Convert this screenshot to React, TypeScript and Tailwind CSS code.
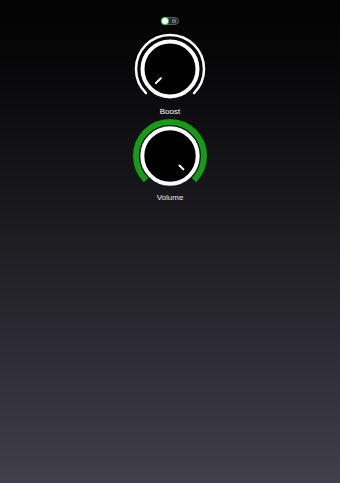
function Toggle() {
  return (
    <div className="flex h-[8px] w-[18px] items-center justify-between rounded-full border border-[#5a5a5e] bg-[#2a2a2d] pr-[2px]">
      <div className="-ml-px flex h-[8px] w-[8px] items-center justify-center rounded-full bg-[#34c759]">
        <div className="h-[6px] w-[6px] rounded-full bg-white" />
      </div>
      <div className="h-[4px] w-[4px] rounded-full border border-[#9a9a9e]" />
    </div>
  );
}

function BoostKnob() {
  return (
    <svg width="74" height="74" viewBox="0 0 74 74">
      <path
        d="M 12.96 61.04 A 34 34 0 1 1 61.04 61.04"
        fill="none"
        stroke="white"
        strokeWidth="2.5"
        strokeLinecap="round"
      />
      <circle cx="37" cy="37" r="27.5" fill="black" stroke="white" strokeWidth="4" />
      <line x1="27.8" y1="46.2" x2="22.86" y2="51.14" stroke="white" strokeWidth="2" strokeLinecap="round" />
    </svg>
  );
}

function VolumeKnob() {
  return (
    <svg width="78" height="78" viewBox="0 0 78 78">
      <path
        d="M 14.96 63.04 A 34 34 0 1 1 63.04 63.04"
        fill="none"
        stroke="#169b16"
        strokeWidth="6"
      />
      <circle cx="39" cy="39" r="27.7" fill="black" stroke="white" strokeWidth="4" />
      <line x1="48.5" y1="48.5" x2="52.4" y2="52.4" stroke="white" strokeWidth="2" strokeLinecap="round" />
    </svg>
  );
}

export default function App() {
  return (
    <main
      className="flex min-h-screen w-full flex-col items-center bg-gradient-to-b from-[#030303] to-[#413f4b] pt-[17px] text-white"
      style={{ fontFamily: '"Liberation Sans", Arial, sans-serif' }}
    >
      <Toggle />
      <div className="mt-[7px]">
        <BoostKnob />
      </div>
      <div className="h-[11px] text-[8px] leading-[11px] text-white">Boost</div>
      <VolumeKnob />
      <div className="-mt-[3px] h-[11px] text-[8px] leading-[11px] text-[#e8e8ec]">Volume</div>
    </main>
  );
}
